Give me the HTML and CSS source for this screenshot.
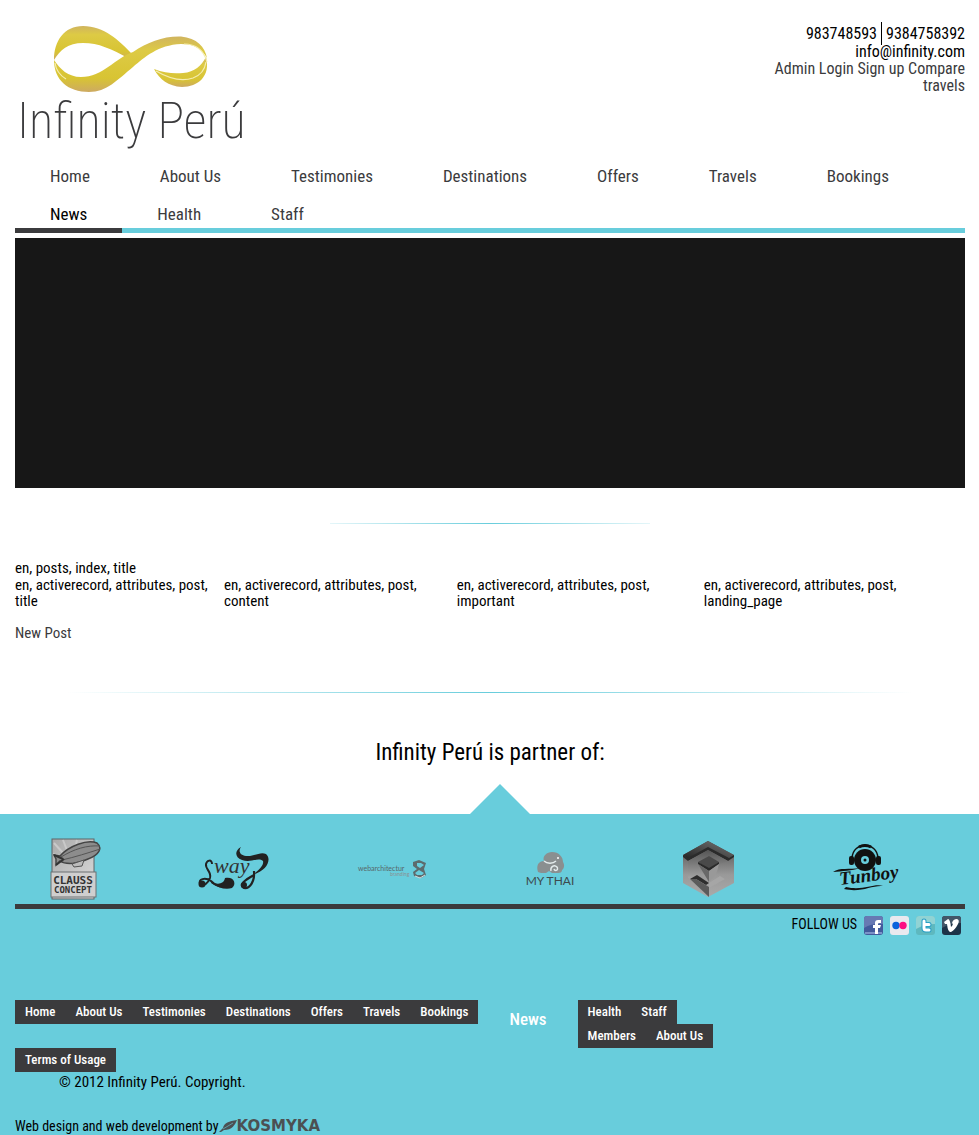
FILE: index.html
```html
<!DOCTYPE html>
<html lang="en">
<head>
<meta charset="utf-8">
<meta name="viewport" content="width=device-width, initial-scale=1">
<title>Infinity Perú</title>
<link rel="stylesheet" href="styles.css">
</head>
<body>
<div class="page">
  <header class="header">
    <a class="brand" href="#">
      <svg class="brand-mark" viewBox="50 22 162 74" aria-hidden="true">
        <defs>
          <linearGradient id="gold" x1="0" y1="0" x2="0" y2="1">
            <stop offset="0" stop-color="#d0b45f"/><stop offset=".25" stop-color="#ddca45"/>
            <stop offset=".75" stop-color="#d8c433"/><stop offset="1" stop-color="#cdaa62"/>
          </linearGradient>
        </defs>
        <path fill="url(#gold)" d="M54 60C54 41 64 26 83 26C104 26 119 40 133 55L128 58C111 49 99 43 83 43C68 43 60 50 54 60Z"/>
        <path fill="url(#gold)" d="M54 60C60 69 68 77 81 77C103 77 115 58 133 52C148 42 163 36 181 36.500C197 38 205 47 207 58C202 50 196 44 181 44C158 45 145 57 133 67C117 80 107 92 89 92C68 92 54 80 54 60Z"/>
        <path fill="url(#gold)" d="M206 57C211 76 198 87 182 87C168 86 160 80 154 69C164 73 174 74 183 73C195 72 201 66 206 57Z"/>
        <path fill="none" stroke="#f5edb0" stroke-width="1.200" d="M55 63C56 70 61 76 66 79M156 71C168 78 181 82 193 78C201 75 205 69 206 62M184 44C197 44 204 51 207 62"/>
      </svg>
      <span class="brand-name">Infinity Perú</span>
    </a>
    <div class="contact">
      <div class="phones"><span>983748593</span><span class="phone-next">9384758392</span></div>
      <div>info@infinity.com</div>
      <div class="account"><a href="#">Admin Login</a> <a href="#">Sign up</a> <a href="#">Compare travels</a></div>
    </div>
  </header>

  <nav class="main-nav" aria-label="Main">
    <a href="#">Home</a><a href="#">About Us</a><a href="#">Testimonies</a><a href="#">Destinations</a><a href="#">Offers</a><a href="#">Travels</a><a href="#">Bookings</a><a class="current" href="#">News</a><a href="#">Health</a><a href="#">Staff</a>
  </nav>

  <div class="slider"></div>
  <hr class="rule rule-short">

  <main class="posts">
    <h1>en, posts, index, title</h1>
    <table>
      <tr>
        <th class="col-title">en, activerecord, attributes, post, title</th>
        <th class="col-content">en, activerecord, attributes, post, content</th>
        <th class="col-important">en, activerecord, attributes, post, important</th>
        <th class="col-landing">en, activerecord, attributes, post, landing_page</th>
      </tr>
    </table>
    <a class="new-post" href="#">New Post</a>
  </main>

  <hr class="rule rule-long">
  <h2 class="partner-title">Infinity Perú is partner of:</h2>
</div>

<footer class="footer">
  <div class="pointer"></div>
  <div class="partners">
    <svg viewBox="0 0 52 62" width="52" height="62" role="img" aria-label="Clauss Concept">
      <defs><linearGradient id="sky" x1="0" y1="0" x2="1" y2="1"><stop offset="0" stop-color="#a9a9a9"/><stop offset="1" stop-color="#dedede"/></linearGradient></defs>
      <rect x="2" y="1" width="42" height="60" fill="url(#sky)" stroke="#5d6466"/>
      <path d="M22 25L4 5M22 25L13 2M22 25L27 2M22 25L3 16" stroke="#c9c9c9" stroke-width="2"/>
      <path d="M10 18C19 8 37 1 47 5C53 10 49 17 38 21C28 26 16 27 10 23L6 27L6 21L4 17Z" fill="#8c8c8c" stroke="#444" stroke-width="1.500"/>
      <path d="M11 19C24 11 37 7 50 8M12 22C25 19 38 15 50 11" stroke="#555" fill="none"/>
      <path d="M22 26L34 22L32 28L24 29Z" fill="#bbb" stroke="#555"/>
      <path d="M4 17L13 21M6 27L14 21" stroke="#333" stroke-width="2"/>
      <rect x="1" y="34" width="45" height="25" fill="#cfcfcf" stroke="#6c7173"/>
      <text x="23" y="46" class="clauss">CLAUSS</text>
      <text x="23" y="55" class="clauss clauss-small">CONCEPT</text>
    </svg>
    <svg viewBox="0 0 72 44" width="72" height="44" role="img" aria-label="Sway">
      <path fill="#222" d="M43 0C40 4 42 8 48 9C56 10 62 4 68 7C74 12 69 24 56 27C62 22 66 18 65 14C60 10 53 16 44 13C36 10 37 3 43 0Z"/>
      <path fill="none" stroke="#222" stroke-width="2" d="M14 17C14 12 9 13 8 17C7 22 14 25 12 31C10 36 6 40 2 37C0 32 7 30 13 34C20 41 30 42 33 34"/>
      <path fill="#222" d="M13 35C20 38 26 37 27 31C36 29 39 37 34 41C28 43 20 41 13 36Z"/>
      <circle cx="4" cy="37" r="3.500" fill="#222"/>
      <path fill="none" stroke="#222" stroke-width="2.200" d="M56 24C57 34 52 42 46 41C40 38 47 33 56 28"/>
      <circle cx="46" cy="38" r="3" fill="#222"/>
      <text x="16" y="26" class="sway">way</text>
    </svg>
    <svg viewBox="0 0 70 20" width="70" height="20" role="img" aria-label="Webarchitecture branding">
      <text x="1" y="12" class="webarch">webarchitectur</text>
      <text x="33" y="17" class="webarch webarch-small">branding</text>
      <path fill="#5d6b6d" fill-rule="evenodd" d="M56 3L62 1L69 4L67 10L69 16L64 19L57 17L56 13L60 10L56 7ZM60 4L60 7L63 9L67 6L64 4ZM62 11L58 14L60 16L65 16L67 14Z"/>
      <path d="M58 17L63 19L68 16" stroke="#d4dadb" fill="none"/>
    </svg>
    <svg viewBox="0 0 50 36" width="50" height="36" role="img" aria-label="My Thai">
      <path fill="#8a8f90" d="M13 21C11 15 13 10 19 10C17 5 22 1 27 1C34 1 38 6 38 11C40 14 39 18 37 19C37 22 34 22 31 22H27L24 20L21 22H16Z"/>
      <path fill="none" stroke="#e4eced" stroke-width="1.400" d="M19 10C22 13 28 13 31 10M26 20C25 16 29 13 32 16C34 19 30 21 29 18"/>
      <circle cx="33" cy="7" r="1" fill="#fff"/>
      <text x="25" y="34" class="thai">MY THAI</text>
    </svg>
    <svg viewBox="0 0 52 58" width="52" height="58" role="img" aria-label="Cube">
      <defs>
        <linearGradient id="cubeA" x1="0" y1="1" x2="1" y2="0"><stop offset="0" stop-color="#222"/><stop offset="1" stop-color="#777"/></linearGradient>
        <linearGradient id="cubeB" x1="0" y1="0" x2="0" y2="1"><stop offset="0" stop-color="#444"/><stop offset=".6" stop-color="#999"/><stop offset="1" stop-color="#aaa"/></linearGradient>
        <linearGradient id="cubeC" x1="0" y1="0" x2="0" y2="1"><stop offset="0" stop-color="#555"/><stop offset="1" stop-color="#a5a5a5"/></linearGradient>
      </defs>
      <path fill="url(#cubeB)" d="M26 1L52 15V43L26 57L1 43V15Z"/>
      <path fill="url(#cubeA)" d="M1 15L26 1L52 15L46 19L26 8L6 19Z"/>
      <path fill="#2b2b2b" d="M1 15L6 18L26 7L47 18L52 15V17L46 21L26 10L6 21L1 17Z"/>
      <path fill="url(#cubeC)" d="M6 21L26 10L46 21L38 24L27 16L16 23L18 35L9 39L6 38Z"/>
      <path fill="#4a4a4a" d="M16 22L27 16L37 22L27 29Z"/>
      <path fill="#2a2a2a" d="M16 22L27 28L37 22L37 24L27 31L16 24Z"/>
      <path fill="#686868" d="M16 24L27 31V42Z"/>
      <path fill="#999" d="M27 31L37 24L34 35L27 42Z"/>
      <path fill="#2e2e2e" d="M8 39L15 35L27 43L24 45L14 39Z"/>
      <path fill="#5b5b5b" d="M8 39H14L27 47V57Z"/>
      <path fill="#a6a6a6" d="M27 43L38 36L43 39L27 48Z"/>
    </svg>
    <svg viewBox="0 0 68 50" width="68" height="50" role="img" aria-label="Tunboy">
      <circle cx="33" cy="16" r="11" fill="#111"/>
      <circle cx="33" cy="16" r="4" fill="#68cddc"/><circle cx="33" cy="16" r="1.500" fill="#111"/>
      <path d="M20 14C21 -3 45 -3 46 14" fill="none" stroke="#111" stroke-width="1.500"/>
      <path d="M27 3Q33 0 39 3" fill="none" stroke="#111" stroke-width="3"/>
      <rect x="17" y="12" width="5" height="9" rx="2" fill="#111"/><rect x="44" y="12" width="5" height="9" rx="2" fill="#111"/>
      <path d="M1 28C8 23 17 26 28 24C20 27 10 27 1 28M14 43C31 47 42 39 51 42C39 41 30 49 12 45Z" fill="#111"/>
      <text x="8" y="41" class="tunboy" transform="rotate(-7 8 41)">Tunboy</text>
    </svg>
  </div>

  <div class="follow">
    <span>FOLLOW US</span>
    <a href="#" aria-label="Facebook"><svg viewBox="0 0 19 19"><rect width="19" height="19" rx="3" fill="#425a9c"/><path d="M0 3Q0 0 3 0H16Q19 0 19 3V8Q9 7 0 12Z" fill="#6779b3"/><path d="M1 17H18" stroke="#7b91c7" stroke-width="2"/><path d="M11 18V12H9V9H11V7Q11 4 14 4H17V7H15Q14 7 14 8V9H17L16 12H14V18Z" fill="#fff"/></svg></a>
    <a href="#" aria-label="Flickr"><svg viewBox="0 0 19 19"><rect width="19" height="19" rx="3" fill="#e9e9ef"/><circle cx="6" cy="9.500" r="3.700" fill="#0b63dc"/><circle cx="13" cy="9.500" r="3.700" fill="#fd0d83"/></svg></a>
    <a href="#" aria-label="Twitter"><svg viewBox="0 0 19 19"><rect width="19" height="19" rx="3" fill="#5eb8bf"/><path d="M0 3Q0 0 3 0H16Q19 0 19 3V8Q9 8 0 13Z" fill="#91d3d4"/><path d="M8 5V12Q8 14 10 14H13M8 8.500H13" stroke="#289fc6" stroke-width="5" stroke-linecap="round" fill="none"/><path d="M8 5V12Q8 14 10 14H13M8 8.500H13" stroke="#fff" stroke-width="3" stroke-linecap="round" fill="none"/></svg></a>
    <a href="#" aria-label="Vimeo"><svg viewBox="0 0 19 19"><rect width="19" height="19" rx="3" fill="#1d3348"/><path d="M0 3Q0 0 3 0H16Q19 0 19 3V7Q9 7 0 12Z" fill="#425668"/><path d="M2 6L6 3Q8 3 9 11Q12 8 10 7Q11 3 15 3Q18 4 16 8Q13 14 9 16Q6 17 5 8L3 8Z" fill="#fff"/></svg></a>
  </div>

  <nav class="foot-nav" aria-label="Footer">
    <div class="chips"><a href="#">Home</a><a href="#">About Us</a><a href="#">Testimonies</a><a href="#">Destinations</a><a href="#">Offers</a><a href="#">Travels</a><a href="#">Bookings</a></div>
    <a class="foot-current" href="#">News</a>
    <div class="chip-stack">
      <div class="chips"><a href="#">Health</a><a href="#">Staff</a></div>
      <div class="chips"><a href="#">Members</a><a href="#">About Us</a></div>
    </div>
  </nav>
  <div class="chips"><a href="#">Terms of Usage</a></div>
  <p class="copyright">© 2012 Infinity Perú. Copyright.</p>
  <p class="credit">Web design and web development by
    <a class="kosmyka" href="#"><svg viewBox="0 0 18 12" width="18" height="12" aria-hidden="true"><path fill="#4c5052" d="M0 12L4 8C5 3 10 1 18 0C16 5 13 10 5 10L2 12Z"/><path d="M4 9L14 3" stroke="#68cddc" stroke-width=".6"/></svg>KOSMYKA</a></p>
</footer>
</body>
</html>
```
FILE: styles.css
```css
* { box-sizing: border-box; }

body {
  margin: 0;
  background: #fff;
  color: #000;
  font: 15px/16px "Roboto Condensed", "Lato", sans-serif;
}

a { color: #3b3b3d; text-decoration: none; }
h1, h2, p { margin: 0; font-weight: 400; }

.page { padding: 0 14px 0 15px; }

.header {
  display: flex;
  justify-content: space-between;
  align-items: flex-start;
  padding: 22px 0 16px;
}
.brand { display: block; padding-left: 2px; }
.brand-mark { display: block; width: 162px; height: 74px; margin-left: 33px; }
.brand-name {
  display: block;
  font: 200 50px/50px "Roboto Condensed", "Lato", sans-serif;
}
.contact {
  width: 200px;
  font-size: 16px;
  line-height: 17px;
  text-align: right;
}
.phones { display: flex; justify-content: flex-end; height: 21px; line-height: 23px; }
.phone-next { height: 23px; margin-left: 4px; padding-left: 4px; border-left: 1px solid #000; }

.main-nav {
  display: flex;
  flex-wrap: wrap;
  row-gap: 10px;
  border-bottom: 5px solid #68cddc;
}
.main-nav a {
  height: 28px;
  padding: 0 35px;
  font-size: 17px;
  line-height: 28px;
}
.main-nav .current {
  height: 33px;
  margin-bottom: -5px;
  border-bottom: 5px solid #3b3b3d;
  color: #000;
}

.slider { height: 250px; margin-top: 5px; background: #171717; }

.rule { height: 1px; margin: 35px auto; border: 0; }
.rule-short { width: 320px; background: linear-gradient(90deg, #e4f6f9, #68cddc, #e4f6f9); }
.rule-long { width: 89%; margin: 51px auto 45px; background: linear-gradient(90deg, #fff, #68cddc, #fff); }

.posts h1 { font-size: 15px; line-height: 18px; }
.posts table { width: 100%; border-collapse: collapse; table-layout: fixed; }
.posts th { padding: 0 12px 0 0; font-weight: 400; text-align: left; vertical-align: top; }
.col-title { width: 22%; }
.col-content { width: 24.5%; }
.col-important { width: 26%; }
.new-post { display: block; margin-top: 16px; }

.partner-title { font-size: 23px; line-height: 30px; text-align: center; }

.footer {
  position: relative;
  margin-top: 46px;
  padding: 24px 14px 0 15px;
  background: #68cddc;
}
.pointer {
  position: absolute;
  top: -30px;
  left: 50%;
  margin-left: -20px;
  border: 30px solid transparent;
  border-top: 0;
  border-bottom-color: #68cddc;
}
.partners {
  display: grid;
  grid-template-columns: repeat(6, 1fr);
  gap: 36px;
  align-items: center;
  justify-items: center;
  height: 71px;
  padding: 0 38px 4px 0;
  border-bottom: 5px solid #3b3b3d;
}
.clauss { font: 700 11px "DejaVu Sans Mono", monospace; text-anchor: middle; fill: #333; }
.clauss-small { font-size: 9px; }
.sway { font: italic 22px "Liberation Serif", serif; fill: #333; }
.webarch { font: 7px "Lato", sans-serif; fill: #57676a; }
.webarch-small { font-size: 5px; fill: #8b8f90; }
.thai { font: 12px "Lato", sans-serif; text-anchor: middle; fill: #3d4a4d; }
.tunboy { font: italic 700 19px "Liberation Serif", serif; fill: #111; }

.follow {
  display: flex;
  justify-content: flex-end;
  align-items: center;
  gap: 7px;
  height: 33px;
  padding-right: 4px;
  font-size: 14px;
}
.follow span { padding-bottom: 3px; }
.follow svg { display: block; width: 19px; height: 19px; }

.foot-nav { display: flex; align-items: flex-start; min-height: 48px; margin-top: 58px; }
.chips { display: flex; }
.chips a {
  padding: 0 10px;
  background: #3b3b3d;
  color: #fff;
  font-size: 13px;
  font-weight: 500;
  line-height: 24px;
}
.foot-current { padding: 0 31px; color: #fff; font-size: 17px; font-weight: 500; line-height: 38px; }
.copyright { padding-left: 44px; line-height: 20px; }
.credit { display: flex; align-items: center; height: 19px; margin-top: 24px; font-size: 14px; }
.kosmyka { display: flex; align-items: center; color: #4c5052; font: 700 15px/16px "DejaVu Sans", sans-serif; }
```
